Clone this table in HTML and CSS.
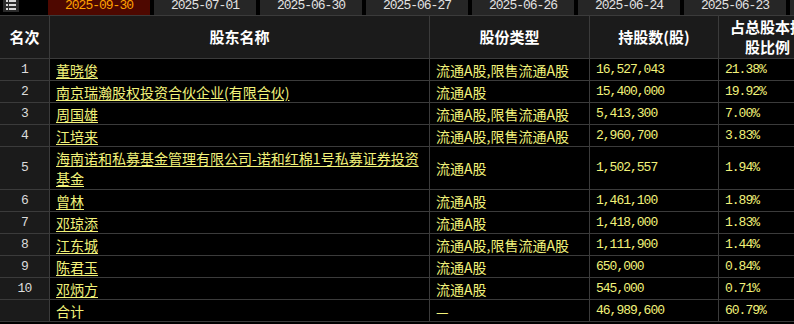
FILE: index.html
```html
<!DOCTYPE html>
<html lang="zh">
<head>
<meta charset="utf-8">
<link rel="stylesheet" href="styles.css">
</head>
<body>
<div class="page">
  <div class="tabbar">
    <div class="menu-icon">
      <svg width="16" height="13" viewBox="0 0 16 13">
        <rect x="0" y="0" width="16" height="13" fill="#2b2b2b"/>
        <rect x="3" y="1" width="2" height="2" fill="#d8d8d8"/>
        <rect x="6" y="1" width="7" height="2" fill="#d8d8d8"/>
        <rect x="3" y="5" width="2" height="2" fill="#d8d8d8"/>
        <rect x="6" y="5" width="7" height="2" fill="#d8d8d8"/>
        <rect x="3" y="9" width="2" height="2" fill="#d8d8d8"/>
        <rect x="6" y="9" width="7" height="2" fill="#d8d8d8"/>
      </svg>
    </div>
    <div class="tabs">
      <div class="tab active">2025-09-30</div>
      <div class="tab">2025-07-01</div>
      <div class="tab">2025-06-30</div>
      <div class="tab">2025-06-27</div>
      <div class="tab">2025-06-26</div>
      <div class="tab">2025-06-24</div>
      <div class="tab">2025-06-23</div>
      <div class="tab">2025-06-20</div>
    </div>
  </div>
  <div class="table-wrap">
    <table class="grid">
      <colgroup>
        <col class="c-rank"><col class="c-name"><col class="c-type"><col class="c-num"><col class="c-pct">
      </colgroup>
      <thead>
        <tr>
          <th class="rank">名次</th>
          <th>股东名称</th>
          <th>股份类型</th>
          <th>持股数(股)</th>
          <th class="two-line">占总股本持<br>股比例</th>
        </tr>
      </thead>
      <tbody>
        <tr><td class="rank">1</td><td class="name"><a>董晓俊</a></td><td class="type">流通A股,限售流通A股</td><td class="num">16,527,043</td><td class="num">21.38%</td></tr>
        <tr><td class="rank">2</td><td class="name"><a>南京瑞瀚股权投资合伙企业(有限合伙)</a></td><td class="type">流通A股</td><td class="num">15,400,000</td><td class="num">19.92%</td></tr>
        <tr><td class="rank">3</td><td class="name"><a>周国雄</a></td><td class="type">流通A股,限售流通A股</td><td class="num">5,413,300</td><td class="num">7.00%</td></tr>
        <tr><td class="rank">4</td><td class="name"><a>江培来</a></td><td class="type">流通A股,限售流通A股</td><td class="num">2,960,700</td><td class="num">3.83%</td></tr>
        <tr class="tall"><td class="rank">5</td><td class="name"><a>海南诺和私募基金管理有限公司-诺和红棉1号私募证券投资基金</a></td><td class="type">流通A股</td><td class="num">1,502,557</td><td class="num">1.94%</td></tr>
        <tr><td class="rank">6</td><td class="name"><a>曾林</a></td><td class="type">流通A股</td><td class="num">1,461,100</td><td class="num">1.89%</td></tr>
        <tr><td class="rank">7</td><td class="name"><a>邓琼添</a></td><td class="type">流通A股</td><td class="num">1,418,000</td><td class="num">1.83%</td></tr>
        <tr><td class="rank">8</td><td class="name"><a>江东城</a></td><td class="type">流通A股,限售流通A股</td><td class="num">1,111,900</td><td class="num">1.44%</td></tr>
        <tr><td class="rank">9</td><td class="name"><a>陈君玉</a></td><td class="type">流通A股</td><td class="num">650,000</td><td class="num">0.84%</td></tr>
        <tr><td class="rank">10</td><td class="name"><a>邓炳方</a></td><td class="type">流通A股</td><td class="num">545,000</td><td class="num">0.71%</td></tr>
        <tr><td class="rank"></td><td class="name">合计</td><td class="type">—</td><td class="num">46,989,600</td><td class="num">60.79%</td></tr>
      </tbody>
    </table>
  </div>
</div>
</body>
</html>
```

FILE: styles.css
```css
html, body {
  margin: 0;
  padding: 0;
  background: #000;
}
body {
  width: 794px;
  height: 324px;
  overflow: hidden;
  font-family: "Noto Sans CJK SC", "Liberation Sans", sans-serif;
}
.page {
  width: 794px;
  overflow: hidden;
}
.tabbar {
  height: 15px;
  display: flex;
  align-items: flex-start;
  overflow: hidden;
  background: #000;
}
.menu-icon {
  margin-left: 3px;
  width: 16px;
  height: 13px;
  margin-top: -1px;
}
.menu-icon svg { display: block; }
.tabs {
  display: flex;
  gap: 4px;
  margin-left: 29px;
  flex: none;
}
.tab {
  flex: none;
  width: 102px;
  height: 15px;
  background: #262626;
  color: #e2e2e2;
  font-family: "Liberation Mono", monospace;
  font-size: 13px;
  letter-spacing: -1px;
  line-height: 11px;
  text-align: center;
  overflow: hidden;
}
.tab.active {
  background: #4e0800;
  color: #ffa200;
}
.table-wrap {
  width: 794px;
  overflow: hidden;
}
.grid {
  border-collapse: collapse;
  table-layout: fixed;
  width: 817px;
  margin-left: -1px;
}
.c-rank { width: 50px; }
.c-name { width: 380px; }
.c-type { width: 160px; }
.c-num { width: 129px; }
.c-pct { width: 98px; }
.grid th, .grid td {
  border: 1px solid #3b3b3b;
  padding: 0;
  overflow: hidden;
  white-space: nowrap;
}
.grid th {
  height: 42px;
  background: #1b1b1b;
  color: #fff;
  font-weight: bold;
  font-size: 15px;
  line-height: 16px;
  text-align: center;
}
.grid th.two-line {
  line-height: 20px;
}
.grid td {
  height: 21px;
  background: #000;
  color: #f2f27a;
  font-size: 14px;
  line-height: 20px;
  text-align: left;
  padding-left: 6px;
}
.grid td.rank {
  background: #1b1b1b;
  color: #dcdcdc;
  text-align: center;
  padding-left: 0;
  font-family: "Liberation Mono", monospace;
  font-size: 13px;
  letter-spacing: -0.8px;
}
.grid td.num {
  font-family: "Liberation Mono", monospace;
  font-size: 13px;
  letter-spacing: -1px;
}
.grid td.name a {
  color: #f2f27a;
  text-decoration: underline;
  text-underline-offset: 2px;
}
.grid tr.tall td {
  height: 42px;
}
.grid tr.tall td.name {
  white-space: normal;
  padding-right: 8px;
  line-height: 20px;
}
```
